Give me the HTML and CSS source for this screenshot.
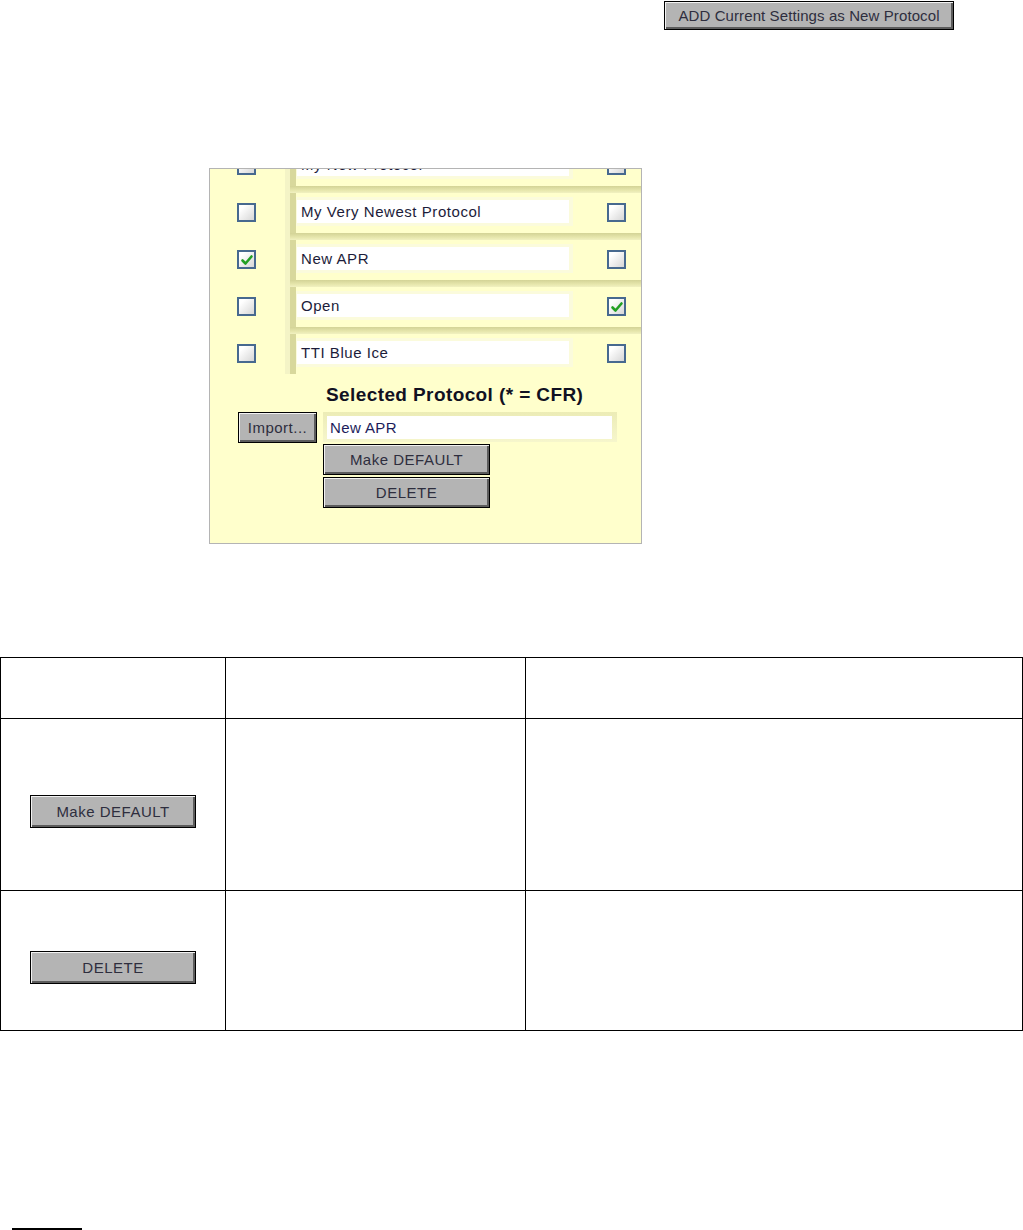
FILE: index.html
```html
<!DOCTYPE html>
<html>
<head>
<meta charset="utf-8">
<link rel="stylesheet" href="styles.css">
</head>
<body>
<div class="top">
  <button class="btn btn-add">ADD Current Settings as New Protocol</button>
</div>

<div class="panel">
  <div class="list">
    <div class="row">
      <div class="cell-l"><span class="cb"></span></div>
      <div class="cell-r">
        <div class="bevel"></div>
        <div class="fields"><div class="field"><span class="inp">My New Protocol</span></div><span class="cb"></span></div>
      </div>
    </div>
    <div class="row">
      <div class="cell-l"><span class="cb"></span></div>
      <div class="cell-r">
        <div class="bevel"></div>
        <div class="fields"><div class="field"><span class="inp">My Very Newest Protocol</span></div><span class="cb"></span></div>
      </div>
    </div>
    <div class="row">
      <div class="cell-l"><span class="cb checked"><svg viewBox="0 0 14 14" width="14" height="14"><polyline points="2.5,7.5 5.5,10.5 11.5,3.5" fill="none" stroke="#23a023" stroke-width="2.6" stroke-linecap="round" stroke-linejoin="round"/></svg></span></div>
      <div class="cell-r">
        <div class="bevel"></div>
        <div class="fields"><div class="field"><span class="inp">New APR</span></div><span class="cb"></span></div>
      </div>
    </div>
    <div class="row">
      <div class="cell-l"><span class="cb"></span></div>
      <div class="cell-r">
        <div class="bevel"></div>
        <div class="fields"><div class="field"><span class="inp">Open</span></div><span class="cb checked"><svg viewBox="0 0 14 14" width="14" height="14"><polyline points="2.5,7.5 5.5,10.5 11.5,3.5" fill="none" stroke="#23a023" stroke-width="2.6" stroke-linecap="round" stroke-linejoin="round"/></svg></span></div>
      </div>
    </div>
    <div class="row">
      <div class="cell-l"><span class="cb"></span></div>
      <div class="cell-r">
        <div class="bevel"></div>
        <div class="fields"><div class="field"><span class="inp">TTI Blue Ice</span></div><span class="cb"></span></div>
      </div>
    </div>
  </div>

  <div class="selected">
    <div class="sel-label">Selected Protocol (* = CFR)</div>
    <div class="sel-row">
      <button class="btn btn-import">Import...</button>
      <div class="sel-field"><span class="sel-inp">New APR</span></div>
    </div>
    <div class="sel-btns">
      <button class="btn btn-wide">Make DEFAULT</button>
      <button class="btn btn-wide">DELETE</button>
    </div>
  </div>
</div>

<table class="tbl">
  <colgroup><col class="c1"><col class="c2"><col class="c3"></colgroup>
  <tr class="r-head"><td></td><td></td><td></td></tr>
  <tr class="r-one"><td class="btn-cell"><button class="btn btn-tbl">Make DEFAULT</button></td><td></td><td></td></tr>
  <tr class="r-two"><td class="btn-cell"><button class="btn btn-tbl">DELETE</button></td><td></td><td></td></tr>
</table>

<div class="underline"></div>
</body>
</html>
```

FILE: styles.css
```css
html, body {
  margin: 0;
  padding: 0;
  background: #ffffff;
}
body {
  font-family: "Liberation Sans", Arial, sans-serif;
  width: 1023px;
  height: 1230px;
  overflow: hidden;
}

.btn {
  font-family: "Liberation Sans", Arial, sans-serif;
  font-size: 15px;
  letter-spacing: 0.5px;
  color: #2e2e3e;
  background: #b4b4b4;
  border: 1px solid #000;
  box-shadow: inset 1px 1px 0 #f2f2f2, inset -2px -2px 0 #5c5c5c;
  padding: 0;
  margin: 0;
  display: block;
  box-sizing: border-box;
  text-align: center;
}

.top {
  padding-left: 664px;
  padding-top: 1px;
  height: 30px;
  box-sizing: border-box;
}
.btn-add {
  width: 290px;
  height: 29px;
  letter-spacing: 0.1px;
}

.panel {
  margin-left: 209px;
  margin-top: 138px;
  width: 433px;
  height: 376px;
  box-sizing: border-box;
  border: 1px solid #b4b4b4;
  background: #ffffcc;
  overflow: hidden;
}

.list {
  margin-top: -30px;
}
.row {
  display: flex;
  height: 47px;
}
.cell-l {
  width: 75px;
  padding-left: 27px;
  padding-top: 17px;
  box-sizing: border-box;
}
.cell-r {
  flex: 1;
  border-left: 5px solid #f4f4c6;
  box-shadow: inset 6px 0 0 #d8d89c;
}
.bevel {
  height: 7px;
  background: linear-gradient(#d3d396, #e6e6ac 60%, #f1f1c0);
}
.fields {
  display: flex;
  align-items: flex-start;
  padding-left: 6px;
  padding-top: 4px;
}
.field {
  width: 277px;
  padding: 3px 4px 3px 1px;
  background: #fbfbdc;
  box-sizing: border-box;
}
.inp {
  display: block;
  height: 23px;
  background: #ffffff;
  font-size: 15px;
  letter-spacing: 0.55px;
  line-height: 23px;
  color: #1c1c3a;
  padding-left: 4px;
  white-space: nowrap;
}
.fields .cb {
  margin-left: 34px;
  margin-top: 6px;
}

.cb {
  display: flex;
  align-items: center;
  justify-content: center;
  width: 19px;
  height: 19px;
  box-sizing: border-box;
  border: 2px solid #47698f;
  background: linear-gradient(135deg, #ffffff 20%, #d6d6d6);
}

.selected {
  margin-top: 9px;
}
.sel-label {
  margin-left: 116px;
  font-size: 19px;
  letter-spacing: 0.4px;
  font-weight: bold;
  line-height: 23px;
  color: #111122;
}
.sel-row {
  display: flex;
  margin-top: 6px;
  margin-left: 28px;
  gap: 6px;
}
.btn-import {
  width: 79px;
  height: 31px;
  font-size: 15px;
}
.sel-field {
  width: 294px;
  height: 30px;
  padding: 4px 5px 3px 4px;
  box-sizing: border-box;
  background: linear-gradient(#ececb6, #f6f6cc);
}
.sel-inp {
  display: block;
  height: 23px;
  background: #ffffff;
  font-size: 15px;
  letter-spacing: 0.4px;
  line-height: 23px;
  color: #1c1c5a;
  padding-left: 3px;
}
.sel-btns {
  margin-left: 113px;
  margin-top: 1px;
  display: flex;
  flex-direction: column;
  gap: 2px;
}
.btn-wide {
  width: 167px;
  height: 31px;
}

.tbl {
  margin-top: 113px;
  border-collapse: collapse;
  table-layout: fixed;
  width: 1022px;
}
.c1 { width: 225px; }
.c2 { width: 300px; }
.c3 { width: 497px; }
.tbl td {
  border: 1px solid #000;
  padding: 0;
  vertical-align: middle;
}
.r-head { height: 61px; }
.r-one { height: 172px; }
.r-two { height: 140px; }
.btn-cell {
  padding-top: 13px !important;
}
.btn-tbl {
  width: 166px;
  height: 33px;
  margin: 0 auto;
}

.underline {
  margin-top: 197px;
  margin-left: 12px;
  width: 70px;
  height: 2px;
  background: #000;
}
```
